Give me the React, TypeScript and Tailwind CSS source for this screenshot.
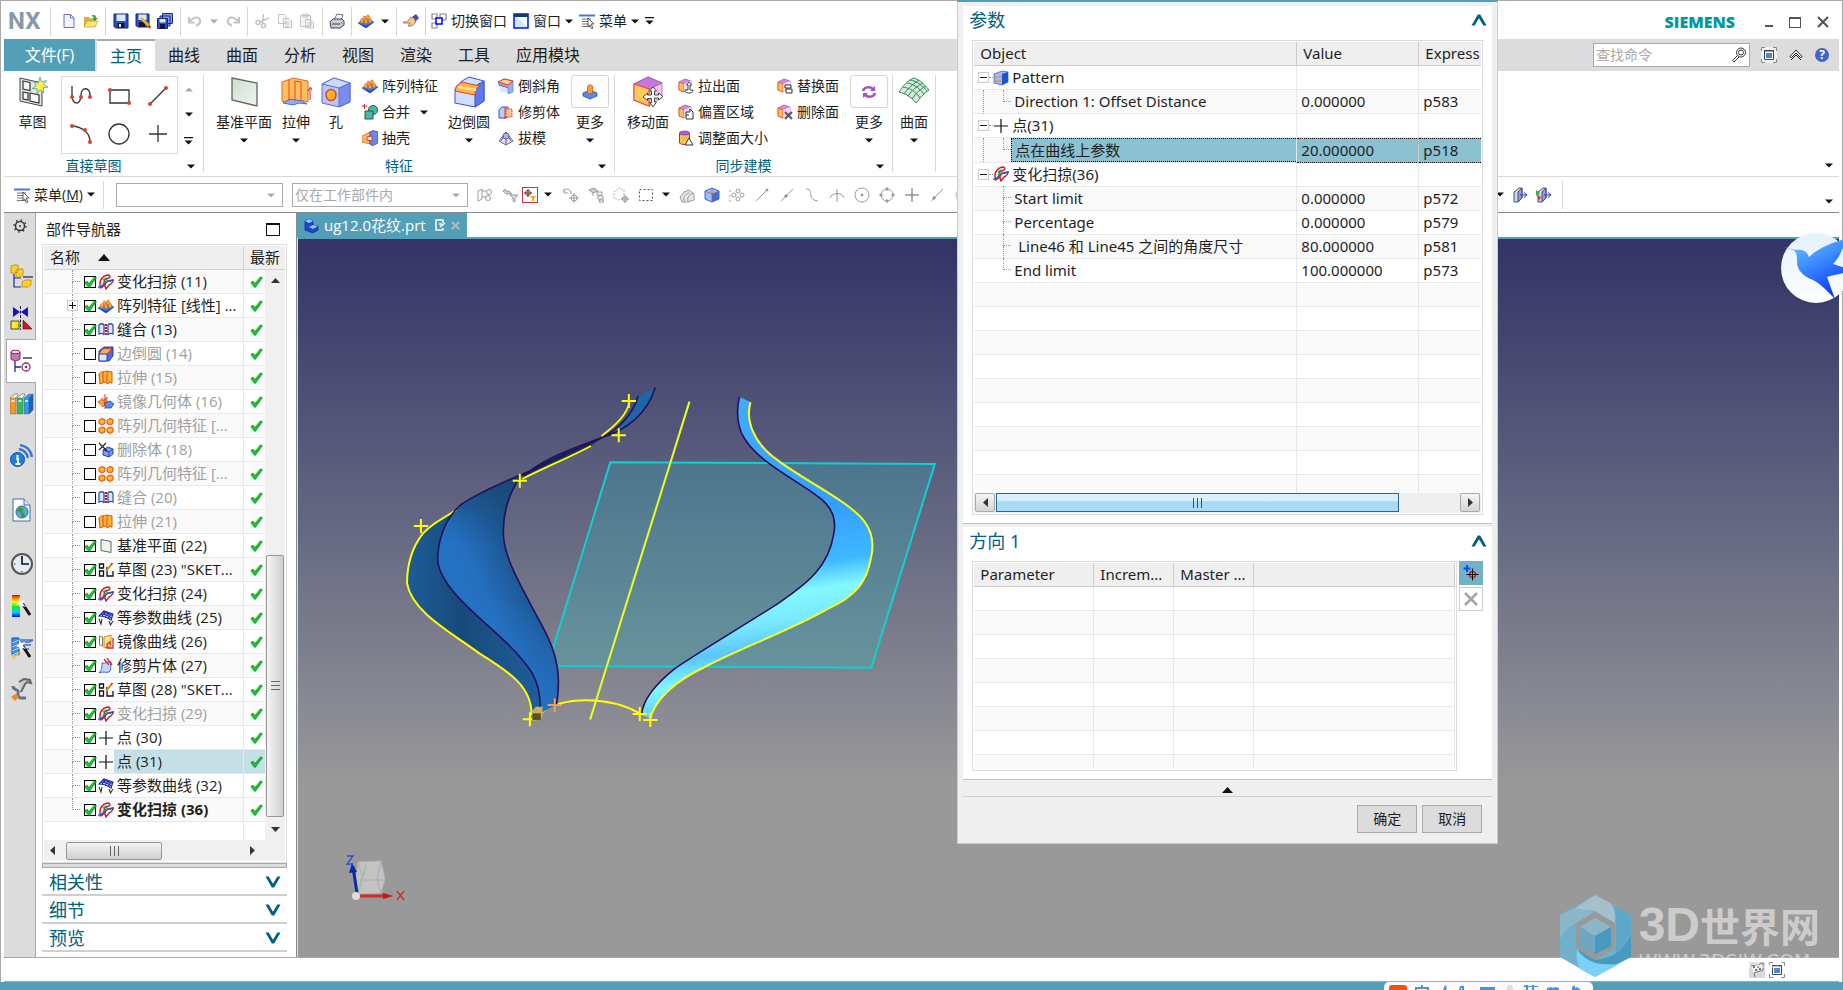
import type { ReactNode } from 'react';
import clsx from 'clsx';

const Caret = ({ className = 'text-[#111]' }: { className?: string }) => (
  <svg className={clsx('shrink-0', className)} width="8" height="5" viewBox="0 0 8 5" fill="currentColor">
    <path d="M0 0.5h8L4 4.5z" />
  </svg>
);

const CaretBar = () => (
  <svg width="9" height="8" viewBox="0 0 9 8" fill="#111">
    <path d="M0 0h9v1.3H0zM0.5 3.5h8l-4 4z" />
  </svg>
);

const Chevron = ({ up = false }: { up?: boolean }) => (
  <svg width="16" height="12" viewBox="0 0 16 12" fill="#00607f">
    {up ? <path d="M0.5 11.5 6.8 0.5h2.4l6.3 11h-3.2L8 4.2l-4.3 7.3z" /> : <path d="M0.5 0.5 6.8 11.5h2.4L15.5 0.5h-3.2L8 7.8 3.7 0.5z" />}
  </svg>
);

/* 16x16 glyphs */
const small: Record<string, ReactNode> = {
  new: <path d="M3 1.5h6.5L13 5v9.5H3zM9.5 1.5V5H13" fill="#f2f4ff" stroke="#6b6fd0" />,
  open: (
    <>
      <path d="M1 13V4h5l1 1.5h6V13z" fill="#e3ae2e" />
      <path d="M1 14 4 8h11l-3 6z" fill="#ffe680" stroke="#c49522" strokeWidth=".7" />
      <path d="M8 3c3-2 5-1 5 2h2l-3 3-3-3h2c0-1-1-2-3-2z" fill="#2fa12c" />
    </>
  ),
  save: (
    <>
      <path d="M1 1h14v14H2.5L1 13.5z" fill="#2b4fbd" stroke="#14286f" />
      <path d="M3.5 1.5h9V8h-9z" fill="#dbe7ff" />
      <path d="M4.5 10h7v5h-7z" fill="#10163c" />
      <path d="M6 11h2v3H6z" fill="#eee" />
    </>
  ),
  saveAs: (
    <>
      <path d="M1 1h13v13H2.5L1 12.5z" fill="#2b4fbd" stroke="#14286f" />
      <path d="M3.5 1.5h8V7h-8z" fill="#dbe7ff" />
      <path d="M4 9h6v5H4z" fill="#10163c" />
      <path d="M6 5l8 8" stroke="#e8b820" strokeWidth="2.6" />
      <path d="m13.5 12.5 2 2.5" stroke="#c22" strokeWidth="2" />
    </>
  ),
  saveAll: (
    <>
      <path d="M5.5.5h10v10h-10zM3 3h10v10H3z" fill="#7d9bea" stroke="#1b2d80" />
      <path d="M.5 5.5h10v10H.5z" fill="#2b4fbd" stroke="#14286f" />
      <path d="M2.5 6h6v3.5h-6z" fill="#dbe7ff" />
      <path d="M3 11h5v4.5H3z" fill="#10163c" />
    </>
  ),
  undo: <path d="M2 4v5.5h5.5M2.5 9c2-4 8-6 10-3s0 5-3.5 7" fill="none" stroke="#c0c4c8" strokeWidth="2" />,
  redo: <path d="M14 4v5.5H8.5M13.5 9c-2-4-8-6-10-3s0 5 3.5 7" fill="none" stroke="#c0c4c8" strokeWidth="2" />,
  cut: (
    <g fill="none" stroke="#c0c4c8" strokeWidth="1.5">
      <path d="m8.5 1-1 9M14 5 5 9" />
      <circle cx="3" cy="9.5" r="2" />
      <circle cx="8.5" cy="12.5" r="2" />
    </g>
  ),
  copy: <path d="M1.5 1.5H7l2 2v7H1.5zM6.5 5.5H12L14.5 8v6.5h-8zM8 9h5M8 11h5M8 13h4" fill="#fafafa" stroke="#c0c4c8" />,
  paste: <path d="M1.5 2.5h10v11h-10zM4 1h5v3H4zM6.5 6.5h5L14.5 9v6h-8zM8 10h5M8 12h5" fill="#f4f4f4" stroke="#c0c4c8" />,
  print: (
    <>
      <path d="M5 7 8 1l6 1-2 5z" fill="#fff" stroke="#445" strokeWidth=".8" />
      <path d="m1 9 3-3h9l2 2v4l-4 3H2z" fill="#c9ced4" stroke="#3d454e" />
      <path d="M3 11h8" stroke="#3d454e" />
      <circle cx="12.5" cy="10" r=".8" fill="#2b2" />
    </>
  ),
  pattern: (
    <>
      <path d="m0 10 8-5 8 4-8 6z" fill="#3b76ea" stroke="#173f9a" strokeWidth=".5" />
      <path d="m0 10 8 3 8-4-8 6z" fill="#1b45a8" />
      <g fill="#ff9f33" stroke="#b8500a" strokeWidth=".35">
        <path d="M5 4.5c0-2 3-2 3 0v3H5z" />
        <path d="M8.5 3.5c0-2 3-2 3 0v3h-3z" />
        <path d="M2.5 7c0-2 3-2 3 0v3h-3z" />
        <path d="M6.5 7.5c0-2 3-2 3 0v3h-3z" />
        <path d="M10.5 6.500c0-2 3-2 3 0v3h-3z" />
      </g>
    </>
  ),
  hand: (
    <>
      <path d="m9 4 4-3 3 4-4 4z" fill="#3b49c4" />
      <path d="M0 9h4l4-5 3 1 2 4-4 4H5l2-3H0z" fill="#f3c88e" stroke="#8a5a26" strokeWidth=".7" />
    </>
  ),
  windows: (
    <g fill="#fff" strokeWidth="1.2">
      <path d="M1 1h5v5H1zM9 1h6v6H9zM1 10h5v5H1z" stroke="#7c8794" />
      <path d="M5 5h6v6H5z" stroke="#00f" strokeWidth="1.5" />
    </g>
  ),
  window: (
    <>
      <path d="M1 1h14v14H1z" fill="#cfe6fb" stroke="#0017e0" strokeWidth="1.5" />
      <path d="M2 2h12v12z" fill="#f4faff" />
      <path d="M1 1h14v3H1z" fill="#123a78" />
    </>
  ),
  menu: (
    <>
      <path d="M0 1.5h16v2H0z" fill="#4a74dc" />
      <path d="M3 6h9M3 8.5h7M3 11h7M3 13.5h9" stroke="#777" />
      <path d="m9 5 6 6h-3l2 4-1.5.7L10.7 12 9 13.5z" fill="#fff" stroke="#333" strokeWidth=".8" />
    </>
  ),
  sweep: (
    <g fill="none" strokeWidth="1.4">
      <path d="M2.5 14C1 8 3 3 9 1c3 0 3.5 1.5 2 3L6.5 6 6 12z" stroke="#cc1f2f" fill="#fff0f0" />
      <path d="M7 12c0-3 2-5 5-5l3-1c0 3-2 4-4 5l-3 4z" stroke="#cc1f2f" />
      <path d="M0 13c4 1 5-3 8-5s5-1 8-2" stroke="#2a57c8" />
      <path d="m5 6 4-2M5 9l4-2" stroke="#23a446" />
    </g>
  ),
  sew: (
    <>
      <path d="M1 3c2-2 4-1 5 0v10c-1-2-3-2-5-1zM15 3c-2-2-4-1-5 0v10c1-2 3-2 5-1z" fill="#dce6fb" stroke="#2a4fb0" strokeWidth="1.2" />
      <path d="M8 2v12" stroke="#c4182b" strokeWidth="2.5" strokeDasharray="2 1" />
    </>
  ),
  edge: (
    <>
      <path d="M1 8V5l5-4h9v9l-4 5H1z" fill="#4a6ae0" stroke="#2a3fb0" />
      <path d="M1 7 5 3c2-1 6 0 9 0l-4 4-4 3z" fill="#ffb04a" stroke="#c22" strokeWidth=".8" />
      <path d="M1 8h8v7H1z" fill="#dbe6ff" stroke="#2a3fb0" />
    </>
  ),
  extrude: (
    <>
      <path d="M1 4c2-3 5-2 7-3l6 1v11l-3-1-1 2-3-2-5 2z" fill="#ffb52e" stroke="#c8590b" />
      <path d="M5 2v10M9 2v10" stroke="#d8482a" />
    </>
  ),
  mirror: (
    <>
      <path d="m0 8 5-4v3l4-4v5l-4 5z" fill="#ffa436" stroke="#c8590b" strokeWidth=".8" />
      <path d="m6 9 6-2 4 3-3 4H8z" fill="#5e8bea" stroke="#1f42a8" strokeWidth=".8" />
      <path d="M7 0v15" stroke="#d33" />
    </>
  ),
  geo4: (
    <g fill="#ffa21e" stroke="#d2481a" strokeWidth=".9">
      <path d="m1 2 3-1.500 3 1v4L4 7 1 5.500zM9 2l3-1.500 3 1v4L12 7 9 5.500zM1 10.500 4 9l3 1v4l-3 1.500L1 14zM9 10.500 12 9l3 1v4l-3 1.500L9 14z" />
      <path d="m2 3 2 1 2-1M10 3l2 1 2-1M2 11.500l2 1 2-1M10 11.500l2 1 2-1" stroke="#ffe03a" />
    </g>
  ),
  delBody: (
    <>
      <path d="m5 8 5-3 5 2v5l-4 3-6-2z" fill="#7d9df0" stroke="#2548b4" />
      <path d="m5 8 6 2v5M11 10l4-3" stroke="#2548b4" fill="none" />
      <path d="m1 1 8 8M8 1 1 8" stroke="#222" strokeWidth="1.2" />
    </>
  ),
  plane: <path d="m3 1.500 10 2v11l-10-2z" fill="#eef4ec" stroke="#5b665b" />,
  sketch: (
    <>
      <path d="M1.500 2h4v4h-4zM1.500 9h4v5h-4zM8 6h1v8h6V9" fill="none" stroke="#111" strokeWidth="1.3" />
      <path d="m8 9 5-6" stroke="#c9971f" strokeWidth="2" />
      <path d="m13 3 1.500-2" stroke="#c33" strokeWidth="2" />
    </>
  ),
  iso: (
    <g fill="none" stroke="#1a23a8" strokeWidth="1.1">
      <path d="m1 6 5-5 9 3-2 6C9 7 5 6 1 6z" fill="#dfe4fb" />
      <path d="M3 4c4 0 7 1 10.500 4M4.500 2.500c4 0 7 1 10 3M4 6l4-4.500M7 7l4-4.500M10 8.500l3-5" />
      <path d="m1 9 2 5 1-5M11 11l1.500 4 2.500-4" stroke="#333" />
    </g>
  ),
  mirrorCurve: (
    <>
      <path d="M1.500 2v9l3 1V3z" fill="#fff" stroke="#777" />
      <path d="m6 3 7-2v11l-7 2z" fill="#ffe28a" stroke="#d78a12" />
      <path d="M15 4v10H9v-4l3-2v3" fill="none" stroke="#d1242f" strokeWidth="1.3" />
    </>
  ),
  trimSheet: (
    <>
      <path d="M4 5c3 1 6-2 9-1-1 4 1 8-2 10-3 1-6-1-10 1 3-3 3-6 3-10z" fill="#c6d6fb" stroke="#3f65cc" />
      <path d="m6 1 5 6M9 0l5 7" stroke="#d1242f" strokeWidth="1.3" />
    </>
  ),
  point: <path d="M8 1v14M1 8h14" stroke="#111" strokeWidth="1.2" />,
  patternBox: (
    <>
      <path d="m1 4 8-3 6 1v10l-6 3-8-2z" fill="#9dbcf6" stroke="#2b54bd" strokeWidth=".7" />
      <path d="m9 4 6-2v10l-6 3z" fill="#1b50d8" />
      <path d="M2.500 6h2v2h-2zM6 6h2v2H6zM2.500 10h2v2h-2zM6 10h2v2H6z" fill="#f58f1e" />
    </>
  ),
  unite: (
    <>
      <circle cx="11" cy="6" r="4.500" fill="#4db8a4" stroke="#22584f" />
      <path d="M3 7h8v8H3z" fill="#4db8a4" stroke="#22584f" />
      <path d="M0 2h5M2.500 0v5" stroke="#d22" />
    </>
  ),
  shell: (
    <>
      <path d="m0 6 8-4v12l-8-2z" fill="#ffb765" stroke="#c8590b" strokeWidth=".7" />
      <path d="m8 2 3-1.500L16 2v11l-6 3-2-2z" fill="#6a88e6" stroke="#2a3fb0" strokeWidth=".7" />
      <path d="m5 7 5-1v5l-5-1z" fill="#fff" stroke="#c33" />
    </>
  ),
  chamfer: (
    <>
      <path d="m0 5 6-4 9 2v11l-5 2V9L1 7z" fill="#8fb0f5" stroke="#6b87c8" strokeWidth=".8" />
      <path d="m0 4 10 3 5-4-9-2zM1 7l9 3" fill="#ffd08a" stroke="#d33" />
      <path d="M2 8v5l7 2v-5z" fill="#d8e4fb" />
    </>
  ),
  trimBody: (
    <>
      <path d="M1 6l3-3h6v9l-2 2H1z" fill="#b9ccfa" stroke="#3550c0" />
      <path d="M8 5h6v8H8z" fill="#ffc58a" stroke="#d33" strokeDasharray="1.5 1" />
      <path d="M7 3v12" stroke="#d33" />
    </>
  ),
  draft: (
    <>
      <path d="m1 11 7-9 7 9-7 4z" fill="#dbe4fb" stroke="#5670b8" />
      <path d="M8 2v13M3 11l5-9 5 9" stroke="#c33" fill="none" />
      <circle cx="8" cy="6" r="3" fill="#9fb7f2" stroke="#3452b8" strokeWidth=".8" />
    </>
  ),
  face: (
    <>
      <path d="m1 4 6-3 6 2v5l-7 6-5-2z" fill="#d28be0" stroke="#9a4cb0" strokeWidth=".7" />
      <path d="m1 4 5 2v8l-5-2z" fill="#ffc04a" stroke="#e0563c" strokeWidth=".8" />
      <path d="m6 6 7-3v5l-7 6z" fill="#f6d9f0" />
    </>
  ),
  cylinder: (
    <>
      <path d="M1.500 3v10c2 2 8 2 10 0V3z" fill="#ffc04a" stroke="#c22" />
      <ellipse cx="6.500" cy="3" rx="5" ry="2" fill="#b65fd0" stroke="#7c3398" strokeWidth=".7" />
      <path d="m7 15 4-7 4 7z" fill="#fff" stroke="#333" />
    </>
  ),
};

const overlays: Record<string, ReactNode> = {
  pull: <path d="m11 4 2.500 3H12v5h3c0 2-1 3-4 3s-4-1-4-3h3V7H8.500z" fill="#fff" stroke="#333" strokeWidth=".9" />,
  offset: <path d="M8 8h4V5l3 3v7H8zM8 11h3" fill="#fff" stroke="#333" />,
  replace: <path d="M8 7h6v3H8zM9 11h6v4H9z" fill="#fff" stroke="#333" />,
  remove: <path d="m8 8 7 7M15 8l-7 7" stroke="#555" strokeWidth="2" />,
};

function Icon({ name, over, size = 16 }: { name: string; over?: string; size?: number }) {
  return (
    <svg className="shrink-0" width={size} height={size} viewBox="0 0 16 16" fill="none">
      {small[name]}
      {over && overlays[over]}
    </svg>
  );
}

/* 32x32 ribbon glyphs */
const large: Record<string, ReactNode> = {
  sketch: (
    <>
      <path d="m3 2 22 5v23L3 25z" fill="#dfe8df" stroke="#444" />
      <path d="m6 5 7 1.500v8L6 13zM6 16l5 1v7l-5-1zM13 17l9 2v8l-9-2z" fill="#f5f8f5" stroke="#333" strokeWidth="1.2" />
      <path d="m23 1 1.500 5 5-1.500-3 4 4.500 2.500-5 .8 1 5-4-3-3 4 .2-5-5-.2 4-3-2.500-4 4.500 1.400z" fill="#fff04a" stroke="#4a9ab8" strokeWidth=".8" />
    </>
  ),
  plane: <path d="m4 2 25 5v23L4 24z" fill="url(#planeFill)" stroke="#5e6a60" strokeWidth="1.3" />,
  extrude: (
    <>
      <path d="M2 6 13 2l15 3v21l-7-2-8 4-11-3z" fill="#ffbe5c" stroke="#e0692a" />
      <path d="m3 27 7-4 12 2 5 3-8-1-6 2z" fill="#8fb1f2" stroke="#4a6cc4" />
      <path d="M9 4v21M15 5v20M21 6v18M15 5l6 1" stroke="#e8452f" />
      <path d="M30 24V12M28 15l2.500-4 2 4" stroke="#d22" />
    </>
  ),
  hole: (
    <>
      <path d="m2 8 12-6 16 5v19l-11 5-17-4z" fill="#b4c8fa" stroke="#5a70d8" />
      <path d="m19 12 11-5v19l-11 5z" fill="#7a8cf0" stroke="#5a70d8" />
      <path d="m2 8 12-6 16 5-11 5z" fill="#cddafa" stroke="#5a70d8" />
      <ellipse cx="11" cy="19" rx="5" ry="5.500" fill="#ffb52e" stroke="#e0452a" strokeWidth="1.5" />
    </>
  ),
  blend: (
    <>
      <path d="M2 15c0-5 4-7 7-10l7-4 15 4v20l-9 6-20-4z" fill="#cfdffb" stroke="#3a50d8" />
      <path d="M22 14c0-5 4-6 9-9v20l-9 6z" fill="#5f78e8" stroke="#3a50d8" />
      <path d="M2 15C3 9 7 8 9 6l18 4c-4 2-5 4-5 9z" fill="#ffb44a" stroke="#e0452a" />
      <path d="m5 11 18 3" stroke="#ffe08a" strokeWidth="2.5" />
    </>
  ),
  moveFace: (
    <>
      <path d="m2 8 14-7 14 6v14l-13 9-15-6z" fill="#f3c3e6" stroke="#b05cc8" strokeWidth=".8" />
      <path d="m2 8 14-7 14 6-13 6z" fill="#c878dc" stroke="#9a4cb0" strokeWidth=".8" />
      <path d="m2 8 15 5v17L2 24z" fill="#ffcb5a" stroke="#e8503c" strokeWidth="1.2" />
      <path d="m21 11 3.500 4h-2v4h4v-2l4.500 3.500-4.500 3.500v-2h-4v4h2L21 31l-3.500-4.500h2v-4h-4v2L11 21l4.500-4v2h4v-4h-2z" fill="#fff" stroke="#444" />
    </>
  ),
  surface: (
    <g stroke="#2f8a56" fill="#d3ebdb">
      <path d="M1 16C5 10 10 4 16 2c6 2 10 6 15 12-5 3-9 8-13 13-4-5-9-9-17-11z" />
      <path d="M6 18C10 12 15 8 21 4M10 20c4-6 9-10 15-13M14 23c4-6 8-10 14-13M5 11c7 1 13 5 17 11M9 7c7 1 12 5 17 11M12 4c7 1 13 6 17 11" fill="none" />
    </g>
  ),
};

const LargeIcon = ({ name }: { name: string }) => (
  <svg className="shrink-0" width="32" height="32" viewBox="0 0 32 32" fill="none">
    <defs>
      <linearGradient id="planeFill" x1="0" y1="0" x2="1" y2="1">
        <stop offset="0" stopColor="#cfe0d2" />
        <stop offset="1" stopColor="#eef3ee" />
      </linearGradient>
    </defs>
    {large[name]}
  </svg>
);

function ToolButton({ icon, label }: { icon: string; label: string }) {
  return (
    <button aria-label={label} className="flex h-7 w-[22px] items-center justify-center">
      <Icon name={icon} />
    </button>
  );
}

const ArrowButton = ({ label, muted = false, className = 'w-4' }: { label: string; muted?: boolean; className?: string }) => (
  <button aria-label={label} className={clsx('flex h-7 shrink-0 items-center justify-center', className)}>
    <Caret className={muted ? 'text-[#aaa]' : 'text-[#111]'} />
  </button>
);

const QuickGroup = ({ children, wide = false, last = false }: { children: ReactNode; wide?: boolean; last?: boolean }) => (
  <div className={clsx('flex h-[29px] shrink-0 items-center', wide ? 'px-1' : 'px-[3px]', !last && 'border-r border-[#d4d4d4]')}>{children}</div>
);

function TitleBar() {
  return (
    <div className="flex h-[38px] shrink-0 items-center pt-0.5 text-sm">
      <div className="flex h-[29px] w-[47px] shrink-0 items-center border-r border-[#d4d4d4] pl-1 font-[Roboto] text-2xl font-bold text-[#8799a8]">
        NX
      </div>
      <QuickGroup>
        <span className="w-1" />
        <ToolButton icon="new" label="新建" />
        <ToolButton icon="open" label="打开" />
      </QuickGroup>
      <QuickGroup wide>
        <ToolButton icon="save" label="保存" />
        <ToolButton icon="saveAs" label="另存为" />
        <ToolButton icon="saveAll" label="全部保存" />
      </QuickGroup>
      <QuickGroup>
        <ToolButton icon="undo" label="撤消" />
        <ArrowButton label="撤消列表" muted />
        <ToolButton icon="redo" label="重做" />
      </QuickGroup>
      <QuickGroup wide>
        <ToolButton icon="cut" label="剪切" />
        <ToolButton icon="copy" label="复制" />
        <ToolButton icon="paste" label="粘贴" />
      </QuickGroup>
      <QuickGroup>
        <ToolButton icon="print" label="打印" />
      </QuickGroup>
      <QuickGroup>
        <ToolButton icon="pattern" label="阵列" />
        <ArrowButton label="阵列列表" />
      </QuickGroup>
      <QuickGroup>
        <ToolButton icon="hand" label="触控" />
      </QuickGroup>
      <QuickGroup last>
        <button className="flex items-center gap-1 pl-0.5">
          <Icon name="windows" />
          切换窗口
        </button>
        <button className="ml-1.5 flex items-center gap-1">
          <Icon name="window" />
          窗口
          <Caret />
        </button>
        <button className="ml-1.5 flex items-center gap-1">
          <Icon name="menu" />
          菜单
          <Caret />
        </button>
        <button aria-label="更多工具" className="ml-1.5">
          <CaretBar />
        </button>
      </QuickGroup>
      <div className="ml-auto flex items-center gap-4 pt-0.5 pr-2.5">
        <span className="mr-3.5 font-['Open_Sans'] text-base font-extrabold text-[#009999]">SIEMENS</span>
        <button aria-label="最小化" className="mt-2 h-[2px] w-2 bg-[#555]" />
        <button aria-label="最大化" className="h-[11px] w-3 border border-t-2 border-[#555]" />
        <button aria-label="关闭">
          <svg width="12" height="12" viewBox="0 0 12 12" stroke="#555" strokeWidth="2">
            <path d="m1 1 10 10M11 1 1 11" />
          </svg>
        </button>
      </div>
    </div>
  );
}

const tabs = ['曲线', '曲面', '分析', '视图', '渲染', '工具'];

function TabBar() {
  return (
    <nav className="flex h-8 shrink-0 bg-[#dcdcdc] text-base">
      <button className="w-[91px] bg-[#539fb7] text-white">文件(F)</button>
      <button className="ml-0.5 w-[58px] border-t-2 border-[#a9a9a9] bg-white text-[#00607f]">主页</button>
      {tabs.map((tab) => (
        <button key={tab} className="w-[58px]">
          {tab}
        </button>
      ))}
      <button className="w-[90px]">应用模块</button>
      <div className="ml-auto flex items-center gap-[11px] pr-2.5">
        <label className="flex h-6 w-[157px] items-center border border-[#a9a9a9] bg-white px-0.5">
          <input aria-label="查找命令" placeholder="查找命令" className="min-w-0 flex-1 text-sm outline-none placeholder:text-[#aaa]" />
          <svg width="16" height="16" viewBox="0 0 16 16" fill="none" stroke="#333">
            <circle cx="10" cy="5.500" r="4.500" />
            <circle cx="10" cy="5.500" r="2.500" />
            <path d="m6.500 8.500-5 5 1.500 1.500 5-5" />
          </svg>
        </label>
        <button aria-label="全屏">
          <FullScreenIcon />
        </button>
        <button aria-label="最小化功能区">
          <svg width="16" height="16" viewBox="0 0 16 16" fill="#fff" stroke="#222">
            <path d="M2 9.500 8 3l6 6.500-1.500 1L8 6l-4.500 4.500z" />
            <path d="m3 13 5-5 5 5" fill="none" />
          </svg>
        </button>
        <button aria-label="帮助" className="flex size-[14px] items-center justify-center rounded-full bg-[#3f66c8] text-xs font-bold text-white">
          ?
        </button>
      </div>
    </nav>
  );
}

const FullScreenIcon = () => (
  <svg width="16" height="16" viewBox="0 0 16 16" fill="none">
    <path d="M0 0h16v16H0z" fill="#fff" fillOpacity=".6" />
    <path d="M.5 4V.5H4M12 .5h3.500V4M15.500 12v3.500H12M4 15.500H.5V12" stroke="#888" />
    <path d="M3.500 3.500h9v9h-9z" fill="#fff" stroke="#445" />
    <path d="M3 3h10v1.500H3z" fill="#445" />
    <path d="M5 6h6v5H5z" fill="#4d86dd" />
  </svg>
);

function BigButton({ icon, label, arrow = false, className }: { icon: string; label: string; arrow?: boolean; className: string }) {
  return (
    <button className={clsx('flex shrink-0 flex-col items-center gap-1 pt-[5px] leading-5 whitespace-nowrap', className)}>
      <LargeIcon name={icon} />
      {label}
      {arrow && <Caret className="mt-0.5 text-[#111]" />}
    </button>
  );
}

function MoreButton({ children }: { children: ReactNode }) {
  return (
    <button className="flex w-[38px] shrink-0 flex-col items-center gap-1 pt-1 leading-5">
      <span className="flex h-[33px] w-full items-center justify-center rounded-[3px] border border-[#d4d4d4]">{children}</span>
      更多
      <Caret className="mt-0.5 text-[#111]" />
    </button>
  );
}

type SmallItem = { icon: string; over?: string; label: string; arrow?: boolean };

function SmallColumn({ items, className }: { items: SmallItem[]; className: string }) {
  return (
    <div className={clsx('flex shrink-0 flex-col pt-0.5', className)}>
      {items.map((item) => (
        <button key={item.label} className="flex h-[26px] items-center gap-1 whitespace-nowrap">
          <Icon name={item.icon} over={item.over} />
          {item.label}
          {item.arrow && <Caret className="ml-1.5 text-[#111]" />}
        </button>
      ))}
    </div>
  );
}

function RibbonGroup({ label, launcher = true, children, className }: { label?: string; launcher?: boolean; children: ReactNode; className?: string }) {
  return (
    <section className={clsx('flex shrink-0 flex-col', className)}>
      <div className="mt-1 -mb-1 flex h-[84px] border-r border-[#d9d9d9]">
        <div className="-mt-1 flex">{children}</div>
      </div>
      <div className="flex h-[17px] items-center border-r border-[#d9d9d9] pr-2">
        <span className="flex-1 pt-[5px] pr-1 text-center text-[#00607f]">{label}</span>
        {launcher && (
          <button aria-label={`${label}选项`} className="pt-1.5">
            <Caret />
          </button>
        )}
      </div>
    </section>
  );
}

const galleryCells: { label: string; art: ReactNode }[] = [
  { label: '轮廓', art: <><path d="M2 1v8c0 12 9 12 9 1 0-9 10-8 9 1" /><g fill="#d8403a" stroke="none"><circle cx="2" cy="12" r="2" /><circle cx="11" cy="12" r="2" /><circle cx="20" cy="12" r="2" /></g></> },
  { label: '矩形', art: <><path d="M2 5h19v13H2z" /><g fill="#d8403a" stroke="none"><circle cx="2" cy="5" r="2" /><circle cx="21" cy="18" r="2" /></g></> },
  { label: '直线', art: <><path d="M3 19 19 3" /><g fill="#d8403a" stroke="none"><circle cx="3" cy="19" r="2" /><circle cx="19" cy="3" r="2" /></g></> },
  { label: '圆弧', art: <><path d="M2 3c11 1 18 7 18 16" /><g fill="#d8403a" stroke="none"><circle cx="2" cy="3" r="2" /><circle cx="15" cy="7" r="2" /><circle cx="20" cy="19" r="2" /></g></> },
  { label: '圆', art: <circle cx="11" cy="11" r="10" /> },
  { label: '点', art: <path d="M11 2v17M2 11h18" /> },
];

function Ribbon() {
  return (
    <div className="relative flex h-[106px] shrink-0 border-b border-[#d9d9d9] text-sm">
      <RibbonGroup label="直接草图" className="w-[200px]">
        <BigButton icon="sketch" label="草图" className="w-[57px]" />
        <div className="mt-[5px] grid h-[78px] w-[117px] grid-cols-3 border border-[#d9d9d9]">
          {galleryCells.map((cell) => (
            <button key={cell.label} aria-label={cell.label} className="flex items-center justify-center">
              <svg width="22" height="22" viewBox="0 0 22 22" fill="none" stroke="#333" strokeWidth="1.3" overflow="visible">
                {cell.art}
              </svg>
            </button>
          ))}
        </div>
        <div className="flex w-[21px] flex-col items-center gap-5 pt-4">
          <svg width="8" height="5" viewBox="0 0 8 5" fill="#aaa">
            <path d="M0 4.500h8L4 .5z" />
          </svg>
          <Caret />
          <CaretBar />
        </div>
      </RibbonGroup>
      <RibbonGroup label="特征" className="w-[411px]">
        <BigButton icon="plane" label="基准平面" arrow className="ml-1 w-[72px]" />
        <BigButton icon="extrude" label="拉伸" arrow className="w-8" />
        <BigButton icon="hole" label="孔" className="w-12" />
        <SmallColumn
          className="ml-0.5 w-20"
          items={[
            { icon: 'pattern', label: '阵列特征' },
            { icon: 'unite', label: '合并', arrow: true },
            { icon: 'shell', label: '抽壳' },
          ]}
        />
        <BigButton icon="blend" label="边倒圆" arrow className="w-[54px]" />
        <SmallColumn
          className="ml-0.5 w-[73px]"
          items={[
            { icon: 'chamfer', label: '倒斜角' },
            { icon: 'trimBody', label: '修剪体' },
            { icon: 'draft', label: '拔模' },
          ]}
        />
        <MoreButton>
          <svg width="16" height="16" viewBox="0 0 16 16">
            <path d="m1 9 7-3 7 3v3l-7 3-7-3z" fill="#5c8ae0" stroke="#2a4fb0" strokeWidth=".8" />
            <path d="M5.500 9V2c1-1.500 4-1.500 5 0v7c-1 1-4 1-5 0z" fill="#ff9f3e" stroke="#c8590b" strokeWidth=".8" />
          </svg>
        </MoreButton>
      </RibbonGroup>
      <RibbonGroup label="同步建模" className="w-[278px]">
        <BigButton icon="moveFace" label="移动面" className="ml-1 w-[58px]" />
        <SmallColumn
          className="ml-px w-[98px]"
          items={[
            { icon: 'face', over: 'pull', label: '拉出面' },
            { icon: 'face', over: 'offset', label: '偏置区域' },
            { icon: 'cylinder', label: '调整面大小' },
          ]}
        />
        <SmallColumn
          className="ml-px w-[73px]"
          items={[
            { icon: 'face', over: 'replace', label: '替换面' },
            { icon: 'face', over: 'remove', label: '删除面' },
          ]}
        />
        <MoreButton>
          <svg width="16" height="16" viewBox="0 0 16 16" fill="none" stroke="#a253bd" strokeWidth="2.5">
            <path d="M2 7c1-4 7-5 10-2M14 9c-1 4-7 5-10 2" />
            <path d="M14 2v5H9zM2 14V9h5z" fill="#a253bd" stroke="none" />
          </svg>
        </MoreButton>
      </RibbonGroup>
      <RibbonGroup launcher={false} className="w-[43px]">
        <BigButton icon="surface" label="曲面" arrow className="w-[42px]" />
      </RibbonGroup>
      <button aria-label="功能区选项" className="mt-auto mr-1.5 mb-2 ml-auto">
        <Caret />
      </button>
    </div>
  );
}

const snapIcons: ReactNode[] = [
  <><path d="m1 4 4-2v10l-4 2zM5 4h4M5 10h4" /><circle cx="12" cy="5" r="2.500" /><circle cx="11" cy="11" r="2.500" /></>,
  <><path d="M1 4h6l3 3H4zM4 2 1 4l3 3" fill="#ccc" /><path d="M8 8h8l-3 3v4l-2-1v-3z" fill="#ddd" /></>,
];

const pointIcons: ReactNode[] = [
  <><path d="M1 5c0-4 6-4 7 0v2M1 2v4h4" /><circle cx="11" cy="11" r="3" /><path d="M11 6v10M6 11h10" /></>,
  <><path d="m1 3 5-2 4 3-5 2zM5 6v3" fill="#ccc" /><path d="M9 5h5v3H9zM10 9h5v3h-5zM11 13h5v2h-5z" /></>,
  <><path d="m1 5 5-4 5 2v7l-5 3-5-2z" strokeDasharray="1.5 1.5" /><circle cx="12" cy="12" r="2.500" fill="#eee" /><path d="M12 8v8M8 12h8" /></>,
  <path d="M1.500 2.500h13v11h-13z" stroke="#555" strokeDasharray="2 2" />,
];

const curveIcons: ReactNode[] = [
  <><path d="m1 10 4-5 5-2 5 4v6l-6 2H3z" fill="#e6e6e6" /><path d="M5 14c-1-5 1-7 5-8M9 14c-1-4 1-6 5-8" /></>,
  <><path d="m1 4 7-3 7 3v8l-7 3-7-3z" fill="#8fc2f8" stroke="#3c62c4" /><path d="m8 7 7-3v8l-7 3z" fill="#3b6fdc" stroke="none" /><path d="M1 4l7 3 7-3M8 1v14" stroke="#e0503c" strokeWidth=".8" /></>,
  <><path d="M1 3v2M1 8v2M1 13v2" /><circle cx="9" cy="4" r="2" /><circle cx="9" cy="12" r="2" /><circle cx="5" cy="8" r="2" /><circle cx="13" cy="8" r="2" /></>,
  <><path d="M2 14 13 3" /><circle cx="13" cy="3" r="1" fill="#777" /></>,
  <><path d="M2 14 14 2" /><circle cx="7" cy="9" r="1.200" fill="#777" /></>,
  <path d="M2 2c6 0 4 4 5 7s2 4 7 5" />,
  <path d="M8 2v13M1 11c2-6 12-6 14 0" />,
  <><circle cx="8" cy="8" r="7" /><circle cx="8" cy="8" r="1" fill="#777" /></>,
  <><circle cx="8" cy="8" r="6" /><path d="M8 .5v3M8 12.500v3M.5 8h3M12.500 8h3" strokeWidth="2.5" /></>,
  <path d="M8 1v14M1 8h14" stroke="#666" />,
  <><path d="M2 14 14 2" /><circle cx="5" cy="11" r="1.200" fill="#777" /></>,
  <circle cx="9" cy="8" r="7" fill="#ececec" stroke="#bbb" />,
];

const SnapIcon = ({ children }: { children: ReactNode }) => (
  <button aria-label="捕捉" className="flex w-[25px] shrink-0 justify-center">
    <svg width="16" height="16" viewBox="0 0 16 16" fill="none" stroke="#9a9a9a">
      {children}
    </svg>
  </button>
);

function FilterSelect({ label, value, className }: { label: string; value: string; className: string }) {
  return (
    <div className={clsx('relative shrink-0', className)}>
      <select aria-label={label} className="h-6 w-full appearance-none border border-[#a9a9a9] bg-white px-0.5 text-[#aaa]">
        <option>{value}</option>
      </select>
      <Caret className="absolute top-[10px] right-2 text-[#aaa]" />
    </div>
  );
}

function SelectionBar() {
  return (
    <div className="flex h-9 shrink-0 items-center border-b border-[#7f8b92] text-sm">
      <button className="ml-2.5 flex h-7 w-[90px] shrink-0 items-center gap-1 border-r border-[#d9d9d9]">
        <Icon name="menu" />
        <span>
          菜单(<u>M</u>)
        </span>
        <Caret />
      </button>
      <FilterSelect label="类型过滤器" value="" className="ml-3 w-[167px]" />
      <FilterSelect label="选择范围" value="仅在工作部件内" className="ml-[9px] w-44" />
      <div className="flex w-[490px] shrink-0 items-center overflow-hidden pl-1">
        {snapIcons.map((icon, i) => (
          <SnapIcon key={i}>{icon}</SnapIcon>
        ))}
        <button aria-label="重置过滤器" className="size-4 shrink-0 border border-[#c8323c]">
          <svg width="14" height="14" viewBox="0 0 14 14" fill="none">
            <circle cx="5" cy="5" r="2.500" stroke="#c22" />
            <path d="M5 1v8M1 5h8" stroke="#333" />
            <path d="M7 8h6l-2 2.500V13H9v-2.500z" fill="#f0a81e" />
          </svg>
        </button>
        <ArrowButton label="过滤器列表" className="w-5" />
        {pointIcons.map((icon, i) => (
          <SnapIcon key={i}>{icon}</SnapIcon>
        ))}
        <ArrowButton label="选择方式" />
        {curveIcons.map((icon, i) => (
          <SnapIcon key={i}>{icon}</SnapIcon>
        ))}
      </div>
      <div className="ml-auto flex h-7 w-[343px] shrink-0 items-center">
        <Caret />
        <div className="flex h-7 items-center gap-2 border-r border-[#d9d9d9] pr-2.5 pl-2">
          {['#fff', '#31b34a'].map((accent) => (
            <button key={accent} aria-label="视图剖切">
              <svg width="16" height="16" viewBox="0 0 16 16">
                <path d="m2 5 5-4h3v10l-4 4H2z" fill="#cfd5f5" stroke="#444" strokeWidth=".9" />
                <path d="m6 5 4-4v10l-4 4z" fill="#8f9ce8" stroke="#444" strokeWidth=".9" />
                <path d="M8 8h6M12 5.500 15 8l-3 2.500" stroke="#2430e0" fill="none" />
                {accent !== '#fff' && <path d="m0 3 4 3-4 3z" fill={accent} />}
                {accent !== '#fff' && <path d="m1 8 4 2-2 4z" fill="#d8342c" />}
              </svg>
            </button>
          ))}
        </div>
        <button aria-label="工具条选项" className="mt-auto mr-1.5 mb-[5px] ml-auto">
          <Caret />
        </button>
      </div>
    </div>
  );
}

const sideIcons: { label: string; className: string; art: ReactNode }[] = [
  { label: '装配导航器', className: 'mt-4 h-[42px]', art: <><path d="M4 10v13h7M4 14h7" stroke="#1b2a99" strokeWidth="1.2" fill="none" /><path d="M13 13h10" stroke="#222" strokeWidth="1.2" /><g fill="#ffcf2e" stroke="#b8860b" strokeWidth=".8"><path d="m1 2 3-1h4v7l-3 1H1zM6 6l3-1h4v6l-3 2H6zM12 18l3-2h6v5l-3 2h-6z" /></g></> },
  { label: '约束导航器', className: 'h-[42px]', art: <><path d="M3 1v10l7-5zM18 1v10l-7-5z" fill="#1414c8" /><path d="M10.500 0v24" stroke="#222" strokeDasharray="3 1.500" /><path d="M1 15h8v8H1z" fill="#ffe92e" stroke="#222" strokeWidth=".8" /><path d="M13 14v9h9z" fill="#d8141e" stroke="#222" strokeWidth=".6" /></> },
  { label: '部件导航器', className: 'h-11', art: <><path d="M1 3v7c2 2 7 2 9 0V3z" fill="#c87ab0" stroke="#7c2366" /><ellipse cx="5.500" cy="3" rx="4.500" ry="1.800" fill="#f2d4e8" stroke="#7c2366" /><path d="M5 12v11M5 18h6" stroke="#1b2a99" strokeWidth="1.3" /><path d="M13 9h9" stroke="#222" strokeWidth="1.3" /><circle cx="16" cy="18" r="4" fill="#fff" stroke="#8e2a73" strokeWidth="1.3" /><circle cx="16" cy="18" r="1.300" fill="#8e2a73" /></> },
  { label: '重用库', className: 'h-[42px]', art: <g stroke="#555" strokeWidth=".4"><path d="m0 6 5-4h3L6 6v16H0z" fill="#f5962a" /><path d="m7 6 5-4h3l-2 4v16H7z" fill="#3fb551" /><path d="m14 6 5-4h4v16l-4 4h-5z" fill="#2e9af0" /><path d="m19 6 4-4v16l-4 4z" fill="#1b62b8" /><path d="m0 6 5-4h3L6 6zM7 6l5-4h3l-2 4z" fill="#f4f4f4" /><path d="M1.500 9h3M8.500 9h3M15 9h3" stroke="#fff" strokeWidth="1.5" /></g> },
  { label: 'HD3D 工具', className: 'mt-2.5 h-[42px]', art: <><circle cx="7.500" cy="15.500" r="7" fill="#1d7fe0" stroke="#0d4f9c" /><path d="M7.500 11v2M6 14.500h2V20M5.500 20h5" stroke="#fff" strokeWidth="2" fill="none" /><path d="M9 5c5 1 8 4 9 9M10 1c6 1 11 5 12 12" stroke="#3d76cc" strokeWidth="2.4" fill="none" /></> },
  { label: 'Web 浏览器', className: 'mt-3 h-[42px]', art: <><path d="M3 1h11l6 6v16H3z" fill="#fff" stroke="#3a6fb8" /><path d="M14 1v6h6" fill="#dce8f8" stroke="#3a6fb8" /><circle cx="12" cy="14" r="6" fill="#5ba8e0" stroke="#2a6a9a" /><path d="M9 9c3 0 5 2 4 4s3 3 2 6c-3 1-4-1-4-3s-4-2-4-4z" fill="#3c9a44" /></> },
  { label: '历史记录', className: 'mt-3 h-[42px]', art: <><circle cx="12" cy="12" r="10" fill="#e4ecf6" stroke="#555" strokeWidth="2" /><path d="M12 4v8h7" stroke="#111" strokeWidth="1.600" fill="none" /><path d="M12 19v1.500M4 12h1.500" stroke="#333" /></> },
  { label: '角色', className: 'h-[42px]', art: <><defs><linearGradient id="rainbow" x1="0" y1="0" x2="0" y2="1"><stop offset="0" stopColor="#f00" /><stop offset=".3" stopColor="#ff0" /><stop offset=".55" stopColor="#0e3" /><stop offset=".8" stopColor="#0cf" /><stop offset="1" stopColor="#00f" /></linearGradient></defs><path d="M2 1h8v22H2z" fill="url(#rainbow)" /><path d="m12 9 8 12" stroke="#111" strokeWidth="3" /><path d="m9 3 2 4 4-1-2 4 3 3-4-1-1 4-2-5-3 0 3-3z" fill="#fff" /></> },
  { label: '加工向导', className: 'h-[42px]', art: <><path d="M2 2h7v17H2z" fill="#3f8be8" stroke="#1d4a98" /><path d="m2 7 7-3M2 11l7-3M2 15l7-3M2 19l7-3" stroke="#b4d8ff" /><path d="M10 4h13l-4 2H10zM12 9h9M14 13h5" stroke="#3d76cc" strokeWidth="1.600" /><path d="m12 9 8 12" stroke="#111" strokeWidth="3" /><path d="m9 3 2 4 4-1-2 4 3 3-4-1-1 4-2-5-3 0 3-3z" fill="#fff" /><path d="m1 20 8-1M3 23l5-6" stroke="#f0c22e" strokeWidth="1.5" /></> },
  { label: '系统工具', className: 'h-[42px]', art: <><path d="m9 4 5-3 6 1 1 3-4-1-2 2-4 8" stroke="#666" strokeWidth="2" fill="#ccc" /><path d="M3 8c0 4 4 3 5 5s-2 5 2 7h6" stroke="#66708c" strokeWidth="3" fill="none" /><path d="m1 19 4-3 4 3-4 4z" fill="#f08a1e" /></> },
];

function SideBar() {
  return (
    <aside className="flex w-8 shrink-0 flex-col items-center border-r border-[#a9a9a9] bg-[#dcdcdc]">
      <button aria-label="资源条选项" className="flex h-[26px] w-full items-center justify-center">
        <svg width="14" height="14" viewBox="0 0 14 14" fill="none" stroke="#333">
          <circle cx="7" cy="7" r="4.500" strokeWidth="1.5" />
          <circle cx="7" cy="7" r="6" strokeWidth="1.5" strokeDasharray="1.5 3.2" />
          <circle cx="7" cy="7" r="1" fill="#333" stroke="none" />
        </svg>
      </button>
      {sideIcons.map((item) => (
        <button
          key={item.label}
          aria-label={item.label}
          className={clsx(
            'flex items-center justify-center',
            item.className,
            item.label === '部件导航器' ? 'z-10 ml-[3px] w-[30px] border border-r-0 border-[#a9a9a9] bg-white' : 'w-full pl-1',
          )}
        >
          <svg width="24" height="24" viewBox="0 0 24 24" fill="none">
            {item.art}
          </svg>
        </button>
      ))}
    </aside>
  );
}

type Feature = { icon: string; label: string; on: boolean; dim?: boolean };

const features: Feature[] = [
  { icon: 'sweep', label: '变化扫掠 (11)', on: true },
  { icon: 'pattern', label: '阵列特征 [线性] ...', on: true },
  { icon: 'sew', label: '缝合 (13)', on: true },
  { icon: 'edge', label: '边倒圆 (14)', on: false },
  { icon: 'extrude', label: '拉伸 (15)', on: false },
  { icon: 'mirror', label: '镜像几何体 (16)', on: false },
  { icon: 'geo4', label: '阵列几何特征 [...', on: false },
  { icon: 'delBody', label: '删除体 (18)', on: false },
  { icon: 'geo4', label: '阵列几何特征 [...', on: false },
  { icon: 'sew', label: '缝合 (20)', on: false },
  { icon: 'extrude', label: '拉伸 (21)', on: false },
  { icon: 'plane', label: '基准平面 (22)', on: true },
  { icon: 'sketch', label: '草图 (23) "SKET...', on: true },
  { icon: 'sweep', label: '变化扫掠 (24)', on: true },
  { icon: 'iso', label: '等参数曲线 (25)', on: true },
  { icon: 'mirrorCurve', label: '镜像曲线 (26)', on: true },
  { icon: 'trimSheet', label: '修剪片体 (27)', on: true },
  { icon: 'sketch', label: '草图 (28) "SKET...', on: true },
  { icon: 'sweep', label: '变化扫掠 (29)', on: true, dim: true },
  { icon: 'point', label: '点 (30)', on: true },
  { icon: 'point', label: '点 (31)', on: true },
  { icon: 'iso', label: '等参数曲线 (32)', on: true },
  { icon: 'sweep', label: '变化扫掠 (36)', on: true },
];

const Tick = () => (
  <svg width="13" height="12" viewBox="0 0 13 12" fill="#12c22e" stroke="#0c8a20" strokeWidth=".6">
    <path d="M.8 6.500 3 5l2 2.500L10.500.8l2 1L5.500 11.300H4.300z" />
  </svg>
);

function FeatureRow({ feature, index }: { feature: Feature; index: number }) {
  const last = index === features.length - 1;
  const selected = feature.label === '点 (31)';
  return (
    <tr className={clsx('h-6', index % 2 === 0 ? 'bg-[#fafafa]' : 'bg-white')}>
      <td className="overflow-hidden border-r border-b border-[#e8e8e8] p-0">
        <div className="relative flex h-[23px] items-center pl-7">
          <div className="mr-1 flex h-6 w-2 shrink-0 flex-col">
            <span className="h-3 border-b border-l border-dotted border-[#999]" />
            {!last && <span className="h-3 border-l border-dotted border-[#999]" />}
          </div>
          {index === 1 && (
            <button aria-label="展开" className="absolute top-1.5 left-[23px] flex size-[11px] items-center justify-center border border-[#ccc] bg-white">
              <svg width="7" height="7" viewBox="0 0 7 7" stroke="#111">
                <path d="M3.500 0v7M0 3.500h7" />
              </svg>
            </button>
          )}
          <span className="relative mr-0.5 size-3 shrink-0">
            <input type="checkbox" aria-label={feature.label} defaultChecked={feature.on} className="peer block size-3 appearance-none border border-black bg-white" />
            <span className="pointer-events-none absolute top-0 left-0 hidden peer-checked:block">
              <Tick />
            </span>
          </span>
          <Icon name={feature.icon} />
          <span
            className={clsx(
              'flex h-[23px] flex-1 items-center pl-[3px] whitespace-nowrap',
              (!feature.on || feature.dim) && 'text-[#a0a0a0]',
              selected && 'bg-[#c4e0e6]',
              last && 'font-bold',
            )}
          >
            {feature.label}
          </span>
        </div>
      </td>
      <td className={clsx('border-b border-[#e8e8e8] p-0 pl-1.5', selected && 'bg-[#c4e0e6]')}>
        <Tick />
      </td>
    </tr>
  );
}

function PartNavigator() {
  return (
    <section className="flex w-[261px] shrink-0 flex-col border-r border-[#7f8b92] pr-[9px] pl-1.5 text-[15px]">
      <header className="flex h-[31px] shrink-0 items-center justify-between pt-0.5 pr-[7px] pl-1">
        <h2>部件导航器</h2>
        <button aria-label="浮动" className="h-[13px] w-[14px] border border-t-2 border-[#111]" />
      </header>
      <div className="flex min-h-0 flex-1 flex-col border border-[#ddd] p-px">
        <div className="relative min-h-0 flex-1 overflow-hidden">
          <table className="w-full table-fixed border-separate border-spacing-0">
            <thead>
              <tr className="h-6 bg-[#efefef] text-left">
                <th className="border-r border-b border-[#d4d4d4] p-0 pl-1.5 font-normal">
                  <span className="flex items-center gap-[18px]">
                    名称
                    <svg width="12" height="7" viewBox="0 0 12 7" fill="#111">
                      <path d="M0 7h12L6 0z" />
                    </svg>
                  </span>
                </th>
                <th className="w-[41px] border-b border-[#d4d4d4] p-0 pl-1.5 font-normal whitespace-nowrap">最新</th>
              </tr>
            </thead>
            <tbody>
              {features.map((feature, i) => (
                <FeatureRow key={i} feature={feature} index={i} />
              ))}
              <tr className="h-6">
                <td className="border-r border-[#e8e8e8]" />
                <td />
              </tr>
            </tbody>
          </table>
          <div className="absolute top-6 right-0 bottom-0 flex w-5 flex-col items-center bg-[#f0f0f0]">
            <svg className="mt-2" width="9" height="5" viewBox="0 0 9 5" fill="#333">
              <path d="M0 5h9L4.500 0z" />
            </svg>
            <div className="mt-auto flex h-[262px] w-[18px] items-center justify-center rounded-[2px] border border-[#979797] bg-linear-to-r from-[#f5f5f5] to-[#cfcfd2]">
              <svg width="9" height="11" viewBox="0 0 9 11" stroke="#666">
                <path d="M0 .5h9M0 4.500h9M0 8.500h9" />
              </svg>
            </div>
            <svg className="mt-2.5 mb-2" width="9" height="5" viewBox="0 0 9 5" fill="#333">
              <path d="M0 0h9L4.500 5z" />
            </svg>
          </div>
        </div>
        <div className="flex h-[21px] shrink-0 items-center bg-[#f0f0f0] pl-1.5">
          <svg width="5" height="9" viewBox="0 0 5 9" fill="#333">
            <path d="M5 0v9L0 4.500z" />
          </svg>
          <div className="ml-[11px] flex h-[18px] w-24 items-center justify-center gap-[3px] rounded-[2px] border border-[#979797] bg-linear-to-b from-[#f5f5f5] to-[#cfcfd2]">
            <ThumbGrip />
          </div>
          <svg className="mr-[30px] ml-auto" width="5" height="9" viewBox="0 0 5 9" fill="#333">
            <path d="M0 0v9l5-4.500z" />
          </svg>
        </div>
      </div>
      <div className="h-[5px] shrink-0 border border-[#a9a9a9] bg-[#dcdcdc]" />
      {['相关性', '细节', '预览'].map((name) => (
        <button key={name} className="flex h-7 shrink-0 items-center justify-between border-b-2 border-[#d0d0d0] pt-0.5 pr-1.5 pl-[7px] text-lg text-[#00607f]">
          {name}
          <Chevron />
        </button>
      ))}
      <div className="h-[5px] shrink-0" />
    </section>
  );
}

const ThumbGrip = ({ className = 'bg-[#666]' }: { className?: string }) => (
  <>
    <span className={clsx('h-2.5 w-px', className)} />
    <span className={clsx('h-2.5 w-px', className)} />
    <span className={clsx('h-2.5 w-px', className)} />
  </>
);

const crosses = [[805, 93], [781, 196], [546, 332], [311, 468], [570, 1048], [831, 1032], [856, 1050]];

function Model() {
  return (
    <svg className="absolute top-[131px] left-0" width="652" height="370" viewBox="19 0 1549 1110" preserveAspectRatio="none" fill="none">
      <defs>
        <linearGradient id="lobe" x1="350" y1="640" x2="570" y2="560" gradientUnits="userSpaceOnUse">
          <stop offset="0" stopColor="#2673c4" />
          <stop offset=".4" stopColor="#2470c0" />
          <stop offset="1" stopColor="#1a4c80" />
        </linearGradient>
        <linearGradient id="lobeBack" x1="280" y1="0" x2="600" y2="0" gradientUnits="userSpaceOnUse">
          <stop offset="0" stopColor="#1d5c96" />
          <stop offset=".4" stopColor="#19497a" />
          <stop offset="1" stopColor="#1d5f9e" />
        </linearGradient>
        <linearGradient id="lobeLow" x1="0" y1="680" x2="0" y2="960" gradientUnits="userSpaceOnUse">
          <stop offset="0" stopColor="#2775c8" stopOpacity="0" />
          <stop offset="1" stopColor="#2471c4" stopOpacity=".7" />
        </linearGradient>
        <linearGradient id="lobeTop" x1="0" y1="318" x2="0" y2="520" gradientUnits="userSpaceOnUse">
          <stop offset="0" stopColor="#17456f" stopOpacity=".9" />
          <stop offset="1" stopColor="#1d5a96" stopOpacity="0" />
        </linearGradient>
        <linearGradient id="ribbon" x1="1150" y1="80" x2="1320" y2="1040" gradientUnits="userSpaceOnUse">
          <stop offset="0" stopColor="#42abff" />
          <stop offset=".35" stopColor="#359eff" />
          <stop offset=".52" stopColor="#3fb8ff" />
          <stop offset=".6" stopColor="#84f8ff" />
          <stop offset=".68" stopColor="#7aeaff" />
          <stop offset=".76" stopColor="#5cc6ff" />
          <stop offset=".84" stopColor="#80f8ff" />
          <stop offset=".9" stopColor="#66d8ff" />
          <stop offset=".96" stopColor="#43b2fb" />
        </linearGradient>
        <linearGradient id="datum" x1="0" y1="280" x2="0" y2="890" gradientUnits="userSpaceOnUse">
          <stop offset="0" stopColor="#4d758e" />
          <stop offset="1" stopColor="#67939c" />
        </linearGradient>
      </defs>
      <path d="M761 277 1532 282 1381 893 612 888z" fill="url(#datum)" stroke="#10cfd0" strokeWidth="2" vectorEffect="non-scaling-stroke" />
      <path d="M949 95 713 1049" stroke="#e8ff20" strokeWidth="2" vectorEffect="non-scaling-stroke" />
      <path d="M595 1030C650 975 760 980 831 1030" stroke="#ff0" strokeWidth="2" vectorEffect="non-scaling-stroke" />

      <path
        d="M548 318C480 350 440 375 395 420 350 455 335 465 316 490 288 535 278 590 278 640 290 725 380 785 450 850 520 905 575 950 574 1035L594 1030C596 930 570 890 520 825 460 750 360 660 351 575L420 450z"
        fill="url(#lobeBack)"
        stroke="#1b5288"
      />
      <path d="M548 318C480 350 440 375 405 405 365 450 350 520 351 575 360 660 460 750 520 825 570 890 596 930 594 1030L633 1005C645 920 635 850 600 770 550 650 510 570 507 495 505 430 520 370 548 318z" fill="url(#lobe)" />
      <path d="M548 318C480 350 440 375 405 405 385 430 375 460 365 520L508 520C505 430 520 370 548 318z" fill="url(#lobeTop)" />
      <path d="M351 575C360 660 460 750 520 825 570 890 596 930 594 1030L633 1005C645 920 635 850 600 770L540 640z" fill="url(#lobeLow)" />
      <path d="M395 420C350 455 335 465 316 490 288 535 278 590 278 640 290 725 380 785 450 850 520 905 575 950 574 1035" stroke="#ff0" strokeWidth="2" vectorEffect="non-scaling-stroke" />
      <g stroke="#24105c" strokeWidth="1.600">
        <path d="M868 52 827 80C815 130 790 170 745 204L740 203C800 180 850 130 868 52z" fill="#1f66a8" stroke="none" />
        <path d="M740 203C660 240 610 265 565 305L552 325C610 285 660 262 715 228z" fill="#123a5c" stroke="none" />
        <path d="M868 52C850 130 800 180 740 203 660 240 610 265 570 303 480 350 440 375 405 405 365 450 350 520 351 575 360 660 460 750 520 825 570 890 596 930 594 1015" vectorEffect="non-scaling-stroke" />
        <path d="M548 318C520 370 505 430 507 495 510 570 550 650 600 770 635 850 645 920 633 1005" vectorEffect="non-scaling-stroke" />
        <path d="M827 78C815 130 790 170 740 204 690 235 610 275 552 318" vectorEffect="non-scaling-stroke" />
      </g>
      <g stroke="#ff0" strokeWidth="1.800">
        <path d="M807 95C800 135 775 165 740 198" vectorEffect="non-scaling-stroke" />
        <path d="M715 228C660 265 600 295 552 327" vectorEffect="non-scaling-stroke" />
      </g>

      <path
        d="M1068 80C1060 120 1062 155 1073 190 1105 275 1200 325 1260 385 1290 415 1298 450 1292 490 1280 590 1230 640 1160 700 1080 765 960 855 915 895 870 940 838 990 835 1035L856 1045C870 980 920 930 990 888 1060 840 1190 780 1280 715 1340 680 1370 640 1380 565 1388 525 1385 490 1365 455 1330 395 1220 330 1160 272 1100 220 1082 150 1094 97z"
        fill="url(#ribbon)"
      />
      <path d="M1094 97C1082 150 1100 220 1160 272 1220 330 1330 395 1365 455 1385 490 1388 525 1380 565 1370 640 1340 680 1280 715 1190 780 1060 840 990 888 920 930 870 980 856 1045" stroke="#f4ff20" strokeWidth="2" vectorEffect="non-scaling-stroke" />
      <path d="M1068 80C1060 120 1062 155 1073 190 1105 275 1200 325 1260 385 1290 415 1298 450 1292 490 1280 590 1230 640 1160 700 1080 765 960 855 915 895 870 940 838 990 835 1035" stroke="#24105c" strokeWidth="1.600" vectorEffect="non-scaling-stroke" />

      {crosses.map(([x, y]) => (
        <path key={x} d={`M${x - 17} ${y}h34M${x} ${y - 21}v42`} stroke="#ff0" strokeWidth="2" vectorEffect="non-scaling-stroke" />
      ))}
      <path d="M612 1005h34M629 985v40" stroke="#f7a04a" strokeWidth="2" vectorEffect="non-scaling-stroke" />
      <path d="M576 1022 584 1010h16v28l-6 12h-18z" fill="#c9ae62" />
      <path d="M576 1030h20v20h-20z" fill="#5c5026" />
    </svg>
  );
}

const Triad = () => (
  <svg className="absolute top-[610px] left-[46px]" width="64" height="56" viewBox="0 0 64 56" fill="none">
    <path d="m14 13 23-1 4 18-4 14-22 1-3-16z" fill="#c3c3c3" stroke="#b4b4b4" />
    <path d="m14 13 4 14-4 18M16 31h25M37 12l-4 18 4 14" stroke="#adadad" />
    <path d="m15 42 7-26" stroke="#9fc2a2" strokeWidth="2" />
    <path d="M13 44 9 18" stroke="#0b2aa8" strokeWidth="3" />
    <path d="m5 24 3-10 5 9z" fill="#0b2aa8" />
    <path d="M15 47h26" stroke="#d42a2a" strokeWidth="3" />
    <path d="m39 44 10 3-10 3z" fill="#c01818" />
    <circle cx="12" cy="47" r="4" fill="#ddd" />
    <path d="M3 7h6l-6 8h6" stroke="#2a4be8" strokeWidth="1.3" />
    <path d="m53 42 7 9M60 42l-7 9" stroke="#d42a2a" strokeWidth="1.3" />
  </svg>
);

const Bird = () => (
  <div className="absolute top-[233px] right-[-8px] size-[70px] rounded-full bg-linear-to-b from-[#e2f1fb] to-white shadow">
    <svg width="70" height="70" viewBox="0 0 70 70">
      <defs>
        <linearGradient id="bird" x1="0" y1="0" x2=".6" y2="1">
          <stop offset="0" stopColor="#7cc8ff" />
          <stop offset=".5" stopColor="#3a8bff" />
          <stop offset="1" stopColor="#0a3cf0" />
        </linearGradient>
      </defs>
      <path d="m2 14 13 3c8-1 11 2 13 7 10-9 22-14 36-18-1 8-5 18-12 25l18 6c-8 4-18 5-24 7l8 22c-8-8-14-15-22-19-10-4-16-10-16-18 0-8-1-11-4-12z" fill="url(#bird)" />
    </svg>
  </div>
);

const Watermark = () => (
  <div className="pointer-events-none absolute right-[23px] bottom-3 flex h-[83px] items-start gap-2">
    <svg width="71" height="82" viewBox="0 0 71 82">
      <path d="M35 0 71 20v42L35 82 0 62V20z" fill="#6fb0cd" />
      <path d="M35 0 56 11c-2 5-1 10-1 17L35 16 14 14z" fill="#a6bfcc" />
      <path d="M51 9 71 20v20c-3 8-7 12-15 18V28c0-8-1-14-5-19z" fill="#5ea7c8" />
      <path d="M71 40v22L56 69C40 72 25 66 17 54l18 11c20-2 30-12 36-25z" fill="#4899c0" />
      <path d="M17 54c8 14 24 17 42 15L35 82 20 74c-3-6-4-13-3-20z" fill="#7cd0f7" />
      <path d="M0 20 12 14c10 0 14 1 21 4L16 28C8 32 4 37 0 44z" fill="#8cb6c9" />
      <path d="m35 17 20 11v25L35 65 16 53V28z" fill="#999" />
      <path d="m35 23 16 9-16 9-15-9z" fill="#8cb6c9" />
      <path d="m20 32 15 9v18l-15-8z" fill="#6fa6c2" />
      <path d="m51 32-16 9v18l16-8z" fill="#4899c0" />
    </svg>
    <div className="text-white/50">
      <div className="flex h-14 items-center pt-1 leading-none font-bold whitespace-nowrap">
        <span className="font-['Liberation_Sans'] text-5xl">3D</span>
        <span className="font-['Noto_Sans_CJK_SC'] text-[40px] leading-[48px]">世界网</span>
      </div>
      <div className="font-['DejaVu_Sans'] text-[19px] leading-5">WWW.3DSJW.COM</div>
    </div>
  </div>
);

function Viewport() {
  return (
    <main className="flex min-w-0 flex-1 flex-col">
      <div className="flex h-6 shrink-0">
        <button className="flex w-[170px] items-center gap-[5px] bg-[#539fb7] pl-[7px] text-[15px] whitespace-nowrap text-white">
          <svg className="shrink-0" width="15" height="15" viewBox="0 0 15 15">
            <path d="m1 3 4-2 4 2v4l5 1v4l-5 3-8-3z" fill="#1747d8" stroke="#0a2a98" strokeWidth=".7" />
            <path d="m1 3 4-2 4 2-4 2zM5 9l4-2 5 1-5 3z" fill="#9cc2ff" />
          </svg>
          ug12.0花纹.prt
          <svg className="ml-1 shrink-0" width="11" height="12" viewBox="0 0 11 12" fill="none" stroke="#fff" strokeWidth="1.5">
            <path d="M8 4V1H1v10h7V9M4 5h3M5 8l5-4" />
          </svg>
          <svg className="shrink-0" width="9" height="9" viewBox="0 0 9 9" stroke="#b9b9b9" strokeWidth="2">
            <path d="m1 1 7 7M8 1 1 8" />
          </svg>
        </button>
      </div>
      <div className="relative min-h-0 flex-1 border-t-2 border-l border-t-[#539fb7] border-l-[#ddd] bg-linear-to-b from-[#333366] to-[#999999] to-[76%]">
        <div className="absolute inset-0 overflow-hidden">
          <Model />
          <Triad />
        </div>
      </div>
    </main>
  );
}

type ParamRow = { object: string; value?: string; expr?: string; icon?: string; last?: boolean; selected?: boolean; cont?: boolean };

const params: ParamRow[] = [
  { object: 'Pattern', icon: 'patternBox' },
  { object: 'Direction 1: Offset Distance', value: '0.000000', expr: 'p583', last: true, cont: true },
  { object: '点(31)', icon: 'point' },
  { object: '点在曲线上参数', value: '20.000000', expr: 'p518', last: true, selected: true, cont: true },
  { object: '变化扫掠(36)', icon: 'sweep' },
  { object: 'Start limit', value: '0.000000', expr: 'p572' },
  { object: 'Percentage', value: '0.000000', expr: 'p579' },
  { object: '\u00a0Line46 和 Line45 之间的角度尺寸', value: '80.000000', expr: 'p581' },
  { object: 'End limit', value: '100.000000', expr: 'p573', last: true },
];

function ParamCells({ row }: { row: ParamRow }) {
  const edge = row.selected ? 'border-y border-dotted border-y-black bg-[#8bc1d0]' : '';
  return (
    <>
      <td className="border-r border-b border-[#e8e8e8] p-0">
        <div className="flex h-[23px] items-center pl-1">
          {row.icon ? (
            <>
              <button aria-label="折叠" className="flex size-[11px] items-center justify-center border border-[#ccc] bg-white">
                <span className="h-px w-[7px] bg-[#111]" />
              </button>
              <span className="w-1 border-b border-dotted border-[#999]" />
              <Icon name={row.icon} />
              <span className="pl-[3px]">{row.object}</span>
            </>
          ) : (
            <>
              <span className={clsx('ml-[5px] h-6 w-5 shrink-0 border-dotted border-[#999]', row.cont && 'border-l')} />
              <div className="flex h-6 w-2 shrink-0 flex-col">
                <span className="h-3 border-b border-l border-dotted border-[#999]" />
                {!row.last && <span className="h-3 border-l border-dotted border-[#999]" />}
              </div>
              <span className={clsx('flex h-6 flex-1 items-center pl-[3px] whitespace-nowrap', edge, row.selected && 'border-l border-l-black')}>{row.object}</span>
            </>
          )}
        </div>
      </td>
      <td className={clsx('border-r border-b border-[#e8e8e8] p-0 pl-1', edge)}>{row.value}</td>
      <td className={clsx('border-b border-[#e8e8e8] p-0 pl-1', edge)}>{row.expr}</td>
    </>
  );
}

const ScrollArrow = ({ left = false }: { left?: boolean }) => (
  <button aria-label={left ? '向左滚动' : '向右滚动'} className="flex h-[19px] w-5 items-center justify-center rounded-[2px] border border-[#a9a9a9] bg-linear-to-b from-[#f5f5f5] to-[#d4d4d4]">
    <svg width="5" height="9" viewBox="0 0 5 9" fill="#333">
      {left ? <path d="M5 0v9L0 4.500z" /> : <path d="M0 0v9l5-4.500z" />}
    </svg>
  </button>
);

function SectionHeader({ title }: { title: string }) {
  return (
    <button className="flex h-[34px] w-full items-center justify-between pr-[5px] pb-1.5 pl-1.5 text-lg text-[#00607f]">
      {title}
      <Chevron up />
    </button>
  );
}

function ParameterDialog() {
  return (
    <div
      role="dialog"
      aria-label="参数"
      className="absolute top-0 left-[52%] flex h-[844px] w-[541px] -translate-x-px flex-col border border-t-2 border-[#ccc] border-t-[#539fb7] bg-[#efefef] px-[5px] pt-1 font-['Noto_Sans','Noto_Sans_CJK_SC',sans-serif] text-[15px]"
    >
      <section className="h-[518px] shrink-0 border-b border-[#c4c4c4] bg-white">
        <SectionHeader title="参数" />
        <div className="mx-[9px] flex h-[475px] flex-col border border-[#ddd] p-px">
          <div className="min-h-0 flex-1 overflow-hidden">
            <table className="w-full table-fixed border-separate border-spacing-0">
              <thead>
                <tr className="h-6 bg-[#efefef] text-left">
                  <th className="border-r border-b border-[#ccc] p-0 pl-1.5 font-normal">Object</th>
                  <th className="w-[122px] border-r border-b border-[#ccc] p-0 pl-1.5 font-normal">Value</th>
                  <th className="w-[62px] overflow-hidden border-b border-[#ccc] p-0 pl-1.5 font-normal whitespace-nowrap">Express</th>
                </tr>
              </thead>
              <tbody>
                {params.map((row, i) => (
                  <tr key={i} className={clsx('h-6', i % 2 === 1 && 'bg-[#fafafa]')}>
                    <ParamCells row={row} />
                  </tr>
                ))}
                {Array.from({ length: 9 }, (_, i) => (
                  <tr key={i} className={clsx('h-6', i % 2 === 0 && 'bg-[#fafafa]')}>
                    <td className="border-r border-b border-[#e8e8e8]" />
                    <td className="border-r border-b border-[#e8e8e8]" />
                    <td className="border-b border-[#e8e8e8]" />
                  </tr>
                ))}
              </tbody>
            </table>
          </div>
          <div className="flex h-5 shrink-0 items-start gap-px bg-[#efefef] px-px">
            <ScrollArrow left />
            <div className="flex h-[19px] w-[403px] items-center justify-center gap-[3px] border border-[#2c628b] bg-linear-to-b from-[#d9f0fc] from-40% to-[#a9daf6] to-45%">
              <ThumbGrip className="bg-[#1c5a7d]" />
            </div>
            <span className="flex-1" />
            <ScrollArrow />
          </div>
        </div>
      </section>
      <section className="mt-[3px] h-[253px] shrink-0 border-b border-[#c4c4c4] bg-white">
        <SectionHeader title="方向 1" />
        <div className="mx-[9px] flex gap-0.5">
          <div className="h-[210px] flex-1 overflow-hidden border border-[#ddd] p-px">
            <div className="h-full overflow-hidden">
              <table className="w-full table-fixed border-separate border-spacing-0">
                <thead>
                  <tr className="h-6 bg-[#efefef] text-left">
                    <th className="w-[120px] border-r border-b border-[#ccc] p-0 pl-1.5 font-normal">Parameter</th>
                    <th className="w-20 border-r border-b border-[#ccc] p-0 pl-1.5 font-normal whitespace-nowrap">Increm...</th>
                    <th className="w-20 border-r border-b border-[#ccc] p-0 pl-1.5 font-normal whitespace-nowrap">Master ...</th>
                    <th className="border-r border-b border-[#ccc] p-0" />
                  </tr>
                </thead>
                <tbody>
                  {Array.from({ length: 8 }, (_, i) => (
                    <tr key={i} className={clsx('h-6', i % 2 === 1 && 'bg-[#fafafa]')}>
                      {[0, 1, 2, 3].map((c) => (
                        <td key={c} className="border-r border-b border-[#e8e8e8]" />
                      ))}
                    </tr>
                  ))}
                </tbody>
              </table>
            </div>
          </div>
          <div className="flex w-6 flex-col gap-0.5">
            <button aria-label="添加" className="flex size-6 items-center justify-center bg-[#72b1c8]">
              <svg width="16" height="16" viewBox="0 0 16 16" fill="none">
                <path d="M4 0v7M.5 3.500h7" stroke="#0050ff" strokeWidth="2" />
                <circle cx="9.500" cy="9.500" r="3" stroke="#d11" strokeWidth="1.5" />
                <path d="M9.500 3.500v12M3.500 9.500h12" stroke="#111" />
              </svg>
            </button>
            <button aria-label="移除" className="flex size-6 items-center justify-center border border-[#ccc] bg-white">
              <svg width="14" height="14" viewBox="0 0 14 14" stroke="#a4a4a4" strokeWidth="2.5">
                <path d="m1 1 12 12M13 1 1 13" />
              </svg>
            </button>
          </div>
        </div>
      </section>
      <button aria-label="收起" className="flex h-[17px] shrink-0 items-center justify-center border-b border-[#d0d0d0] pt-1">
        <svg width="11" height="6" viewBox="0 0 11 6" fill="#111">
          <path d="M0 6h11L5.500 0z" />
        </svg>
      </button>
      <footer className="flex justify-end gap-[5px] pt-2 pr-2.5 text-sm">
        <button className="h-7 w-[60px] border border-[#a9a9a9] bg-[#dcdcdc]">确定</button>
        <button className="h-7 w-[60px] border border-[#a9a9a9] bg-[#dcdcdc]">取消</button>
      </footer>
    </div>
  );
}

function StatusBar() {
  return (
    <div className="flex h-6 shrink-0 items-center justify-end gap-1 border-b border-[#a9a9a9] pr-[54px]">
      <svg width="16" height="16" viewBox="0 0 16 16">
        <path d="M0 0h16v16H0z" fill="#d9d9d9" />
        <path d="m2 4 6-1 6-2v7l-6 2-3 1 1 4" fill="#eee" stroke="#777" />
        <path d="M4 4h2v2H4zM8 4h2v2H8zM6 7h2v2H6zM10 6h2v2h-2z" fill="#777" />
      </svg>
      <FullScreenIcon />
    </div>
  );
}

const ImeBar = () => (
  <div className="absolute right-[250px] bottom-0 flex h-2 w-[209px] items-start gap-2 overflow-hidden rounded-t-[5px] bg-[#fafafa] px-[5px] pt-[3px]">
    <span className="h-3 w-[18px] shrink-0 rounded-t-[3px] bg-[#fb4c12]" />
    <svg width="170" height="5" viewBox="0 0 170 5" fill="#3d97e8">
      <path d="M0 2h14v3h-2V4H2v1H0zM6 0h2v3H6zM30 0c2 2 2 3 1 5h-3zM45 1h4v4h-2V3h-1v2h-2zM65 2h15v3H65zM110 0h3v1h4v1h-4v3h-2V2h-3zM117 0h2v1h4v1h-4v3h-2zM132 3l4-1 2 1 2-1 4 1v2h-12zM157 2l3-2v3l2-1 4 3h-9z" />
      <circle cx="95" cy="3" r="3" fill="#ddd" />
    </svg>
  </div>
);

export default function App() {
  return (
    <div className="relative flex h-screen flex-col overflow-hidden bg-white font-['Open_Sans','Noto_Sans_CJK_SC',sans-serif] text-[#1e1e1e]">
      <div className="flex min-h-0 flex-1 flex-col border-x border-t border-[#a9a9a9] pr-[3px] pl-[3px]">
        <TitleBar />
        <TabBar />
        <Ribbon />
        <SelectionBar />
        <div className="flex min-h-0 flex-1 border-b border-[#a9a9a9]">
          <SideBar />
          <PartNavigator />
          <Viewport />
        </div>
        <StatusBar />
      </div>
      <div className="h-2 shrink-0 bg-[#539fb7]" />
      <Bird />
      <Watermark />
      <ParameterDialog />
      <ImeBar />
    </div>
  );
}
